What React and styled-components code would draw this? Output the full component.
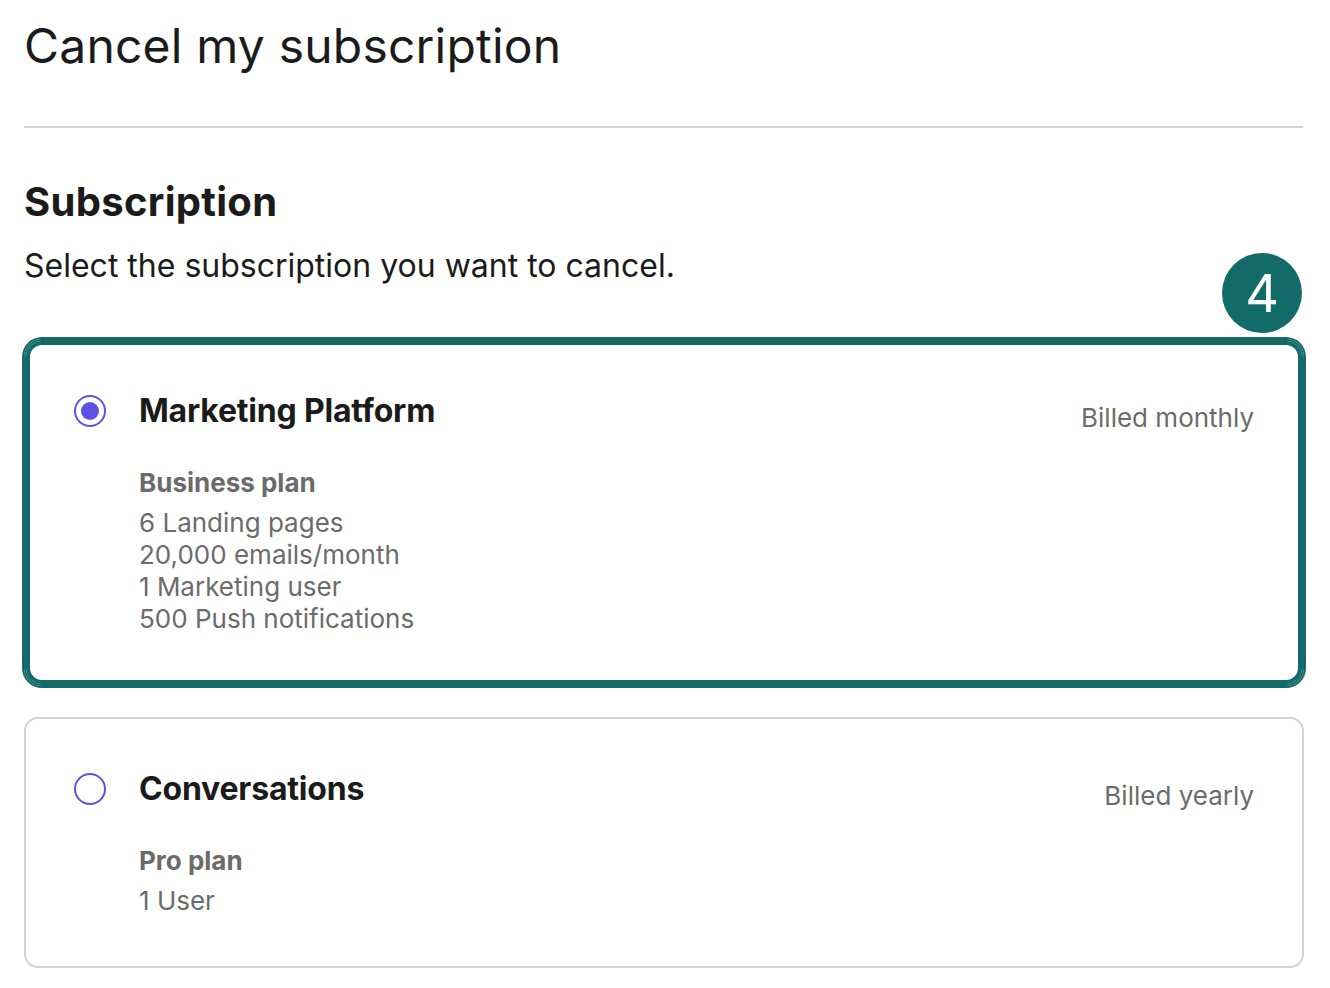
import React, { useState } from 'react';
import styled, { createGlobalStyle } from 'styled-components';

const GlobalStyle = createGlobalStyle`
  body {
    margin: 0;
    background: #fff;
    font-family: Inter, "Noto Sans", sans-serif;
    color: #1b1b1b;
  }
`;

const plans = [
  {
    id: 'marketing',
    name: 'Marketing Platform',
    billing: 'Billed monthly',
    plan: 'Business plan',
    features: ['6 Landing pages', '20,000 emails/month', '1 Marketing user', '500 Push notifications'],
  },
  {
    id: 'conversations',
    name: 'Conversations',
    billing: 'Billed yearly',
    plan: 'Pro plan',
    features: ['1 User'],
  },
];

export default function App() {
  const [selected, setSelected] = useState('marketing');

  return (
    <Page>
      <GlobalStyle />
      <PageTitle>Cancel my subscription</PageTitle>
      <Divider />
      <SectionTitle>Subscription</SectionTitle>
      <Lead>Select the subscription you want to cancel.</Lead>
      <CardList>
        {plans.map((p, i) => (
          <Card key={p.id} selected={selected === p.id} onClick={() => setSelected(p.id)}>
            {i === 0 && <StepBadge>4</StepBadge>}
            <RadioSlot>
              <Radio selected={selected === p.id} />
            </RadioSlot>
            <Body>
              <CardTitle>{p.name}</CardTitle>
              <PlanName>{p.plan}</PlanName>
              <Features>
                {p.features.map((f) => (
                  <li key={f}>{f}</li>
                ))}
              </Features>
            </Body>
            <Billing>{p.billing}</Billing>
          </Card>
        ))}
      </CardList>
    </Page>
  );
}

const Page = styled.div`
  width: 1280px;
  padding: 18px 0 0 24px;
`;

const PageTitle = styled.h1`
  margin: 0;
  font-size: 48px;
  line-height: 56px;
  font-weight: 400;
  letter-spacing: 0.2px;
  color: #1b1b1b;
`;

const Divider = styled.hr`
  margin: 52px 0 0;
  border: 0;
  height: 2px;
  background: #d4d4d4;
  width: 1279px;
`;

const SectionTitle = styled.h2`
  margin: 52px 0 0;
  font-size: 40px;
  line-height: 44px;
  font-weight: 700;
  letter-spacing: 0.3px;
  color: #1b1b1b;
`;

const Lead = styled.p`
  margin: 22px 0 0;
  font-size: 32px;
  line-height: 40px;
  color: #1b1b1b;
`;

const CardList = styled.div`
  display: flex;
  flex-direction: column;
  gap: 31px;
  margin-top: 53px;
`;

const Card = styled.div`
  position: relative;
  display: flex;
  align-items: flex-start;
  padding: 50px 48px 49px 48px;
  border: 2px solid ${({ selected }) => (selected ? '#136b69' : '#d3d3d3')};
  border-radius: ${({ selected }) => (selected ? '18px' : '14px')};
  box-shadow: ${({ selected }) =>
    selected ? '0 0 0 2px #136b69, inset 0 0 0 4px #136b69' : 'none'};
  cursor: pointer;
`;

const StepBadge = styled.div`
  position: absolute;
  top: -88px;
  right: 0;
  width: 80px;
  height: 80px;
  border-radius: 50%;
  background: #136b69;
  color: #fff;
  display: flex;
  align-items: center;
  justify-content: center;
  font-size: 52px;
  font-weight: 400;
`;

const RadioSlot = styled.div`
  height: 40px;
  display: flex;
  align-items: center;
  margin-right: 33px;
`;

const Radio = styled.span`
  box-sizing: border-box;
  width: 32px;
  height: 32px;
  border-radius: 50%;
  border: 2px solid #5f51e2;
  display: flex;
  align-items: center;
  justify-content: center;

  &::after {
    content: '';
    width: 18px;
    height: 18px;
    border-radius: 50%;
    background: #5f51e2;
    display: ${({ selected }) => (selected ? 'block' : 'none')};
  }
`;

const Body = styled.div`
  flex: 1;
`;

const CardTitle = styled.div`
  font-size: 32px;
  line-height: 40px;
  font-weight: 700;
  letter-spacing: -0.2px;
  color: #1b1b1b;
`;

const PlanName = styled.div`
  margin-top: 36px;
  font-size: 26px;
  line-height: 32px;
  font-weight: 700;
  color: #6b6b6b;
`;

const Features = styled.ul`
  margin: 8px 0 0;
  padding: 0;
  list-style: none;
  font-size: 26px;
  line-height: 32px;
  color: #6b6b6b;
`;

const Billing = styled.div`
  margin-top: 11px;
  font-size: 26px;
  line-height: 32px;
  color: #6b6b6b;
`;
